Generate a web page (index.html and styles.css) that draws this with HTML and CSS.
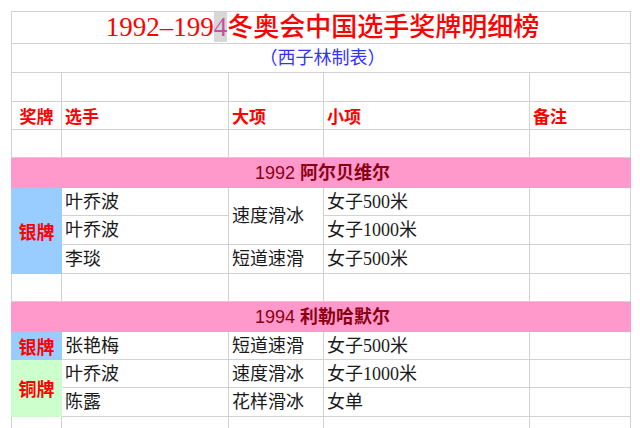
FILE: index.html
```html
<!DOCTYPE html>
<html lang="zh-CN">
<head>
<meta charset="utf-8">
<link rel="stylesheet" href="styles.css">
</head>
<body>
<table class="sheet">
  <colgroup>
    <col class="c1"><col class="c2"><col class="c3"><col class="c4"><col class="c5">
  </colgroup>
  <tr class="r32"><td colspan="5" class="title"><span class="num">1992–199</span><span class="num sel">4</span>冬奥会中国选手奖牌明细榜</td></tr>
  <tr class="r29"><td colspan="5" class="sub">（西子林制表）</td></tr>
  <tr class="r29"><td></td><td></td><td></td><td></td><td></td></tr>
  <tr class="r28 head"><td class="mid">奖牌</td><td>选手</td><td>大项</td><td>小项</td><td>备注</td></tr>
  <tr class="r28"><td></td><td></td><td></td><td></td><td></td></tr>
  <tr class="r30"><td colspan="5" class="games"><span class="yr">1992</span> 阿尔贝维尔</td></tr>
  <tr class="r28"><td rowspan="3" class="medal silver">银牌</td><td>叶乔波</td><td rowspan="2">速度滑冰</td><td>女子500米</td><td></td></tr>
  <tr class="r29"><td>叶乔波</td><td>女子1000米</td><td></td></tr>
  <tr class="r29"><td>李琰</td><td>短道速滑</td><td>女子500米</td><td></td></tr>
  <tr class="r28"><td></td><td></td><td></td><td></td><td></td></tr>
  <tr class="r30"><td colspan="5" class="games"><span class="yr">1994</span> 利勒哈默尔</td></tr>
  <tr class="r28"><td class="medal silver">银牌</td><td>张艳梅</td><td>短道速滑</td><td>女子500米</td><td></td></tr>
  <tr class="r28"><td rowspan="2" class="medal bronze">铜牌</td><td>叶乔波</td><td>速度滑冰</td><td>女子1000米</td><td></td></tr>
  <tr class="r29"><td>陈露</td><td>花样滑冰</td><td>女单</td><td></td></tr>
  <tr class="r28"><td></td><td></td><td></td><td></td><td></td></tr>
</table>
</body>
</html>
```
FILE: styles.css
```css
html, body {
  margin: 0;
  padding: 0;
  background: #ffffff;
  overflow: hidden;
}
body {
  padding: 11px 0 0 11px;
  font-family: "Liberation Serif", "Noto Sans CJK SC", serif;
  font-size: 18px;
  color: #1a1a1a;
}
.sheet {
  border-collapse: collapse;
  table-layout: fixed;
  width: 619px;
}
.c1 { width: 50px; }
.c2 { width: 167px; }
.c3 { width: 95px; }
.c4 { width: 206px; }
.c5 { width: 101px; }
.sheet td {
  border: 1px solid #d2d2d2;
  padding: 0 0 0 3px;
  line-height: 20px;
  white-space: nowrap;
  overflow: hidden;
  vertical-align: middle;
}
.r32 { height: 32px; }
.r30 { height: 30px; }
.r29 { height: 29px; }
.r28 { height: 28px; }
.title {
  text-align: center;
  color: #ff0000;
  font-size: 26px;
  font-family: "Liberation Serif", "Noto Sans CJK SC", serif;
  font-weight: 500;
  line-height: 30px;
}
.title .num { font-weight: 400; font-size: 27px; }
.title .sel {
  background: #d8d8d8;
  color: #c050a0;
}
.sub {
  text-align: center;
  color: #3333ff;
  font-size: 18px;
  padding-top: 1px;
}
.head td {
  color: #ff0000;
  font-weight: 700;
  font-family: "Noto Sans CJK SC", sans-serif;
  font-size: 17px;
}
.head td.mid { text-align: center; padding-left: 0; }
.games {
  background: #ff99cc;
  color: #8b0010;
  text-align: center;
  font-family: "Liberation Sans", "Noto Sans CJK SC", sans-serif;
  font-weight: 700;
  border-color: #ff99cc !important;
}
.games .yr { font-weight: 400; }
.medal {
  color: #ff0000;
  font-weight: 700;
  text-align: center;
  padding-left: 0 !important;
  font-family: "Noto Sans CJK SC", sans-serif;
}
.silver { background: #99ccff; border-color: #99ccff !important; }
.bronze { background: #ccffcc; border-color: #ccffcc !important; }
```
